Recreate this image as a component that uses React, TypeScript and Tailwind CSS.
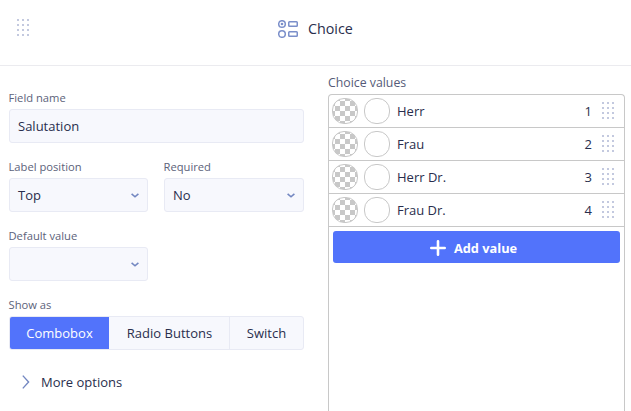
import type { ReactNode } from "react";

const choices = ["Herr", "Frau", "Herr Dr.", "Frau Dr."];

function DragHandle() {
  return (
    <div className="mb-px grid w-3 shrink-0 grid-cols-[2px_2px_2px] gap-[3px]">
      {Array.from({ length: 12 }, (_, i) => (
        <span key={i} className="size-[2px] bg-[#c3c9df]" />
      ))}
    </div>
  );
}

function Label({ children }: { children: ReactNode }) {
  return <div className="-mt-px -ml-[0.5px] h-[19px] text-[11.2px] leading-[15px] whitespace-nowrap text-[#5c627a]">{children}</div>;
}

function Select({ label, value }: { label: string; value: string }) {
  return (
    <div>
      <Label>{label}</Label>
      <div className="flex h-[34px] items-center justify-between rounded-[3px] border border-[#e8eaf4] bg-[#f7f8fd] px-2">
        <span>{value}</span>
        <svg className="h-[5px] w-2" viewBox="0 0 8 5" fill="none" stroke="#7387c1" strokeWidth="1.6">
          <path d="M0.6 0.9 4 3.8 7.4 0.9" />
        </svg>
      </div>
    </div>
  );
}

export default function App() {
  return (
    <div className="flex h-[411px] w-[631px] flex-col overflow-hidden bg-white font-['Open_Sans',sans-serif] text-[13px] leading-[18px] text-[#292e4d]">
      <header className="flex h-[66px] shrink-0 border-b border-[#ebebef] pl-[17px]">
        <div className="pt-[19px]">
          <DragHandle />
        </div>
        <div className="ml-[249px] flex h-[58px] items-center gap-[10px]">
          <svg className="h-[18px] w-5" viewBox="0 0 20 18" fill="none" stroke="#7b8fca" strokeWidth="1.5">
            <circle cx="4" cy="4" r="3.3" />
            <circle cx="4" cy="4" r="1.3" fill="#7b8fca" stroke="none" />
            <circle cx="4" cy="14" r="3.3" />
            <rect x="10.75" y="1.75" width="8.5" height="4.5" rx="0.8" />
            <rect x="10.75" y="11.75" width="8.5" height="4.5" rx="0.8" />
          </svg>
          <h1 className="text-[14.3px] leading-5">Choice</h1>
        </div>
      </header>
      <main className="flex min-h-0 flex-1 pr-[6px] pl-[9px]">
        <section className="w-[295px] shrink-0 pt-[25px]">
          <Label>Field name</Label>
          <div className="flex h-[34px] items-center rounded-[3px] border border-[#e8eaf4] bg-[#f7f8fd] px-2">Salutation</div>
          <div className="mt-[17px] grid grid-cols-[139px_140px] gap-4">
            <Select label="Label position" value="Top" />
            <Select label="Required" value="No" />
          </div>
          <div className="mt-[17px] grid grid-cols-[139px]">
            <Select label="Default value" value="" />
          </div>
          <div className="mt-[17px]">
            <Label>Show as</Label>
            <div className="flex h-[34px] overflow-hidden rounded-[3px] border border-[#e8eaf4] bg-[#f7f8fd]">
              <button className="-my-px w-[99px] bg-[#5273fb] font-medium text-white">Combobox</button>
              <button className="w-[120px] pl-px">Radio Buttons</button>
              <button className="flex-1 border-l border-[#e8eaf4]">Switch</button>
            </div>
          </div>
          <div className="mt-[23px] flex items-center gap-[11px] pl-[13px]">
            <svg className="h-[14px] w-2" viewBox="0 0 8 14" fill="none" stroke="#7387c1" strokeWidth="1.4">
              <path d="M0.8 0.6 6.6 7 0.8 13.4" />
            </svg>
            <span>More options</span>
          </div>
        </section>
        <section className="ml-6 flex flex-1 flex-col pt-2">
          <div className="h-5 text-[12.3px] leading-[18px] text-[#555b78]">Choice values</div>
          <div className="flex-1 rounded-t-[4px] border border-b-0 border-[#c8c8c8]">
            {choices.map((name, i) => (
              <div key={name} className="flex h-[33px] items-center border-b border-[#c8c8c8] pr-[10px] pl-[3px]">
                <span className="size-[26px] rounded-[12px] border border-[#c8c8c8] bg-[conic-gradient(#c8c8c8_25%,#fff_0_50%,#c8c8c8_0_75%,#fff_0)] bg-size-[10px_10px] bg-position-[2px_2px]" />
                <span className="ml-[6px] size-[26px] rounded-[12px] border border-[#c8c8c8]" />
                <span className="ml-[7px] flex-1">{name}</span>
                <span className="mr-[10px]">{i + 1}</span>
                <DragHandle />
              </div>
            ))}
            <button className="mx-1 mt-1 flex h-8 w-[287px] items-center justify-center gap-[8px] rounded-[3px] bg-[#5273fb] pt-px pr-[6px] text-[12.8px] font-bold text-white">
              <svg className="size-4" viewBox="0 0 16 16" stroke="white" strokeWidth="2.6" strokeLinecap="round">
                <path d="M8 1.3v13.4M1.3 8h13.4" />
              </svg>
              Add value
            </button>
          </div>
        </section>
      </main>
    </div>
  );
}
